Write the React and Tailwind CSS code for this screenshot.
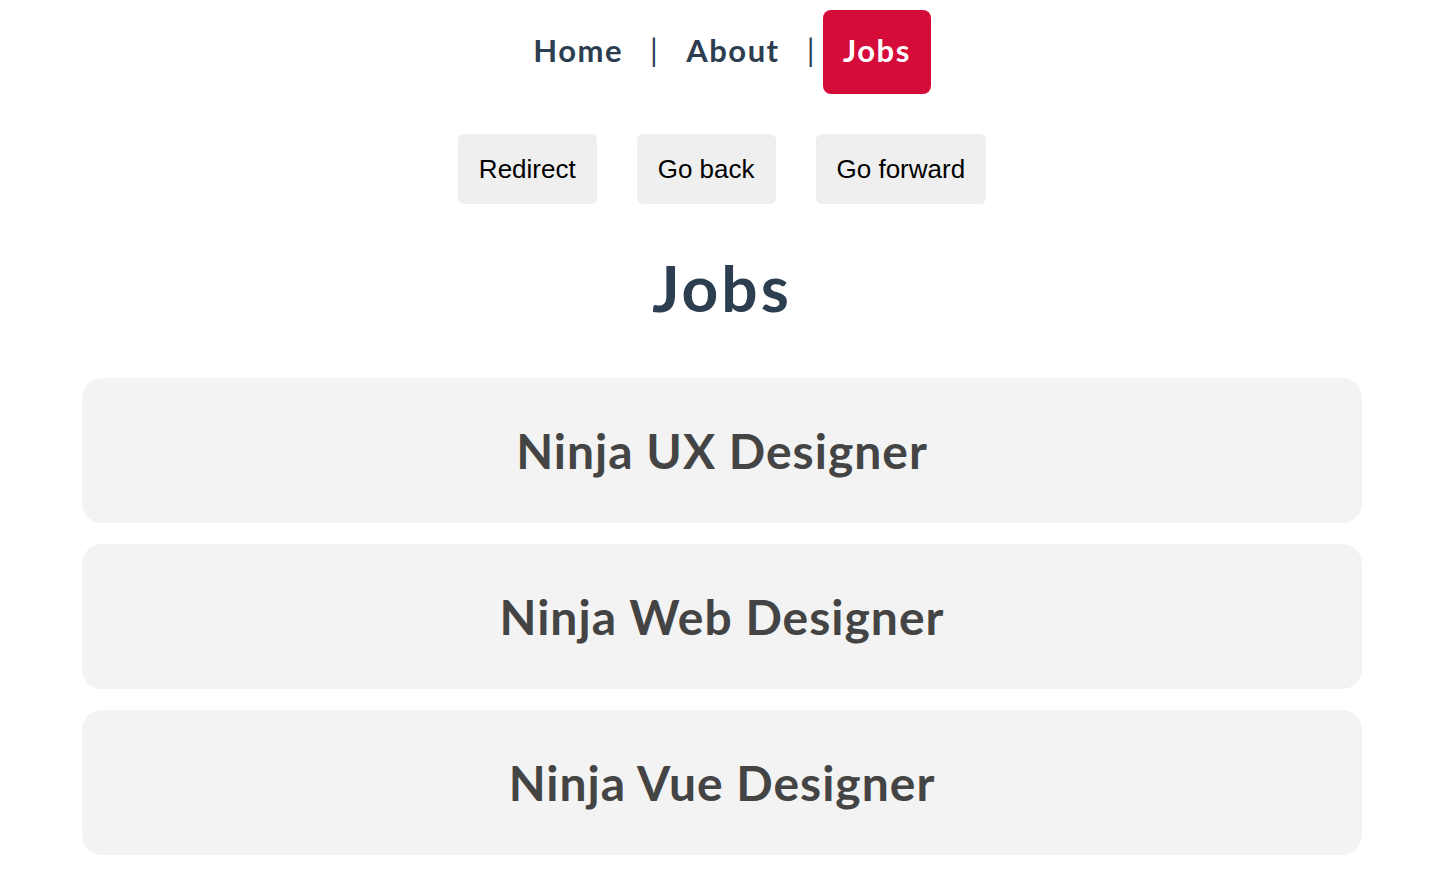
import React from "react";

const font = { fontFamily: "Lato, 'Noto Sans', sans-serif" };

export default function App() {
  const jobs = ["Ninja UX Designer", "Ninja Web Designer", "Ninja Vue Designer"];
  return (
    <div className="min-h-[894px] w-[1444px] bg-white text-[#2c3e50]" style={font}>
      <nav className="flex items-center justify-center pt-[10px] text-[31px] font-bold leading-[44px] tracking-[1.5px]">
        <a className="px-5 pt-[18px] pb-[22px] rounded-lg text-[#2c3e50]">Home</a>
        <span className="px-[7px] pb-[4px] font-normal">|</span>
        <a className="px-5 pt-[18px] pb-[22px] rounded-lg text-[#2c3e50]">About</a>
        <span className="px-[7px] pb-[4px] font-normal">|</span>
        <a className="px-5 pt-[18px] pb-[22px] rounded-lg bg-[#d50b3a] text-white">Jobs</a>
      </nav>
      <div className="mt-[40px] flex justify-center gap-[40px]" style={{ fontFamily: "'Liberation Sans', Arial, sans-serif" }}>
        {["Redirect", "Go back", "Go forward"].map((b) => (
          <button key={b} className="h-[70px] rounded-[6px] bg-[#efefef] px-[21px] text-[26px] leading-[30px] text-black">
            {b}
          </button>
        ))}
      </div>
      <h1 className="mt-[44px] text-center text-[64px] font-bold leading-[80px] tracking-[3px]">Jobs</h1>
      <div className="mx-auto mt-[50px] flex w-[1280px] flex-col gap-[21px]">
        {jobs.map((j) => (
          <div key={j} className="flex h-[145px] items-center justify-center rounded-[20px] bg-[#f3f3f3]">
            <h2 className="text-[48px] font-bold tracking-[1px] text-[#444444]">{j}</h2>
          </div>
        ))}
      </div>
    </div>
  );
}
